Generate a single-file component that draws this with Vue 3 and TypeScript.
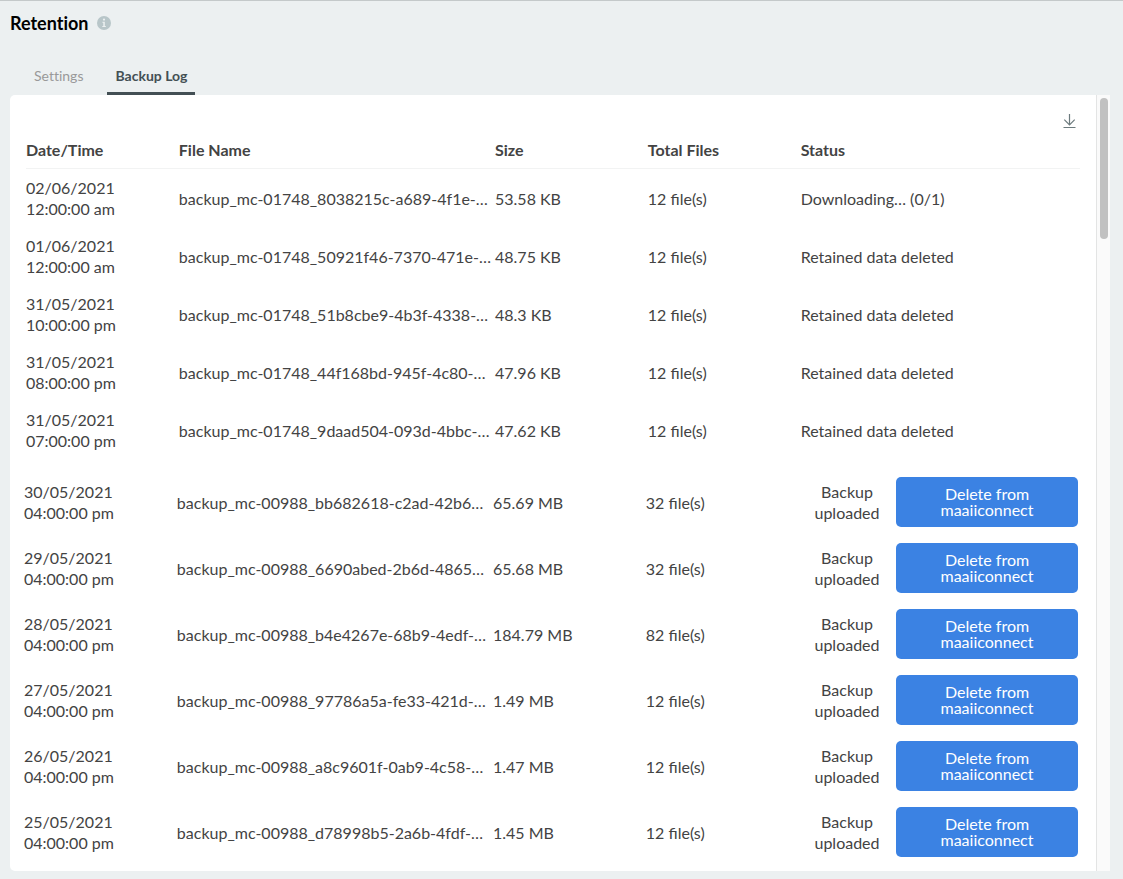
<script setup lang="ts">
import { ref } from 'vue'

interface LogEntry {
  date: string
  time: string
  file: string
  size: string
  total: number
  status: string
}

const tabs = ['Settings', 'Backup Log']
const activeTab = ref('Backup Log')

const processed: LogEntry[] = [
  { date: '02/06/2021', time: '12:00:00 am', file: 'backup_mc-01748_8038215c-a689-4f1e-…', size: '53.58 KB', total: 12, status: 'Downloading… (0/1)' },
  { date: '01/06/2021', time: '12:00:00 am', file: 'backup_mc-01748_50921f46-7370-471e-…', size: '48.75 KB', total: 12, status: 'Retained data deleted' },
  { date: '31/05/2021', time: '10:00:00 pm', file: 'backup_mc-01748_51b8cbe9-4b3f-4338-…', size: '48.3 KB', total: 12, status: 'Retained data deleted' },
  { date: '31/05/2021', time: '08:00:00 pm', file: 'backup_mc-01748_44f168bd-945f-4c80-…', size: '47.96 KB', total: 12, status: 'Retained data deleted' },
  { date: '31/05/2021', time: '07:00:00 pm', file: 'backup_mc-01748_9daad504-093d-4bbc-…', size: '47.62 KB', total: 12, status: 'Retained data deleted' },
]

const uploaded: LogEntry[] = [
  { date: '30/05/2021', time: '04:00:00 pm', file: 'backup_mc-00988_bb682618-c2ad-42b6…', size: '65.69 MB', total: 32, status: 'Backup uploaded' },
  { date: '29/05/2021', time: '04:00:00 pm', file: 'backup_mc-00988_6690abed-2b6d-4865…', size: '65.68 MB', total: 32, status: 'Backup uploaded' },
  { date: '28/05/2021', time: '04:00:00 pm', file: 'backup_mc-00988_b4e4267e-68b9-4edf-…', size: '184.79 MB', total: 82, status: 'Backup uploaded' },
  { date: '27/05/2021', time: '04:00:00 pm', file: 'backup_mc-00988_97786a5a-fe33-421d-…', size: '1.49 MB', total: 12, status: 'Backup uploaded' },
  { date: '26/05/2021', time: '04:00:00 pm', file: 'backup_mc-00988_a8c9601f-0ab9-4c58-…', size: '1.47 MB', total: 12, status: 'Backup uploaded' },
  { date: '25/05/2021', time: '04:00:00 pm', file: 'backup_mc-00988_d78998b5-2a6b-4fdf-…', size: '1.45 MB', total: 12, status: 'Backup uploaded' },
]
</script>

<template>
  <main class="page">
    <header class="heading">
      <h1>Retention</h1>
      <svg class="info" viewBox="0 0 14 14" aria-hidden="true">
        <circle cx="7" cy="7" r="7" fill="#b8c6c9" />
        <circle cx="7" cy="3.6" r="1.1" fill="#ecf0f1" />
        <path d="M5.4 5.8H7.8V10H8.8V11H5.3V10H6.3V6.8H5.4Z" fill="#ecf0f1" />
      </svg>
    </header>

    <nav class="tabs" role="tablist">
      <button
        v-for="tab in tabs"
        :key="tab"
        type="button"
        role="tab"
        class="tab"
        :class="{ active: tab === activeTab }"
        :aria-selected="tab === activeTab"
        @click="activeTab = tab"
      >{{ tab }}</button>
    </nav>

    <section class="panel">
      <div class="content">
        <div class="toolbar">
          <button type="button" class="download" aria-label="Download">
            <svg viewBox="0 0 14 16" aria-hidden="true">
              <path d="M6.5 1V11.5M1.3 6.6L6.5 11.8L11.7 6.6M.5 14.5H12.5" fill="none" stroke="#6c7a7d" stroke-width="1.2" />
            </svg>
          </button>
        </div>
        <table>
          <colgroup>
            <col class="col-date" />
            <col class="col-file" />
            <col class="col-size" />
            <col class="col-total" />
            <col />
          </colgroup>
          <thead>
            <tr>
              <th scope="col">Date/Time</th>
              <th scope="col">File Name</th>
              <th scope="col">Size</th>
              <th scope="col">Total Files</th>
              <th scope="col">Status</th>
            </tr>
          </thead>
          <tbody>
            <tr v-for="entry in processed" :key="entry.file">
              <td><div class="cell date"><span>{{ entry.date }}</span><span>{{ entry.time }}</span></div></td>
              <td><div class="cell file">{{ entry.file }}</div></td>
              <td><div class="cell">{{ entry.size }}</div></td>
              <td><div class="cell">{{ entry.total }} file(s)</div></td>
              <td><div class="cell">{{ entry.status }}</div></td>
            </tr>
          </tbody>
          <tbody class="uploaded">
            <tr v-for="entry in uploaded" :key="entry.file">
              <td><div class="cell date"><span>{{ entry.date }}</span><span>{{ entry.time }}</span></div></td>
              <td><div class="cell file">{{ entry.file }}</div></td>
              <td><div class="cell">{{ entry.size }}</div></td>
              <td><div class="cell">{{ entry.total }} file(s)</div></td>
              <td>
                <div class="action">
                  <span class="state">{{ entry.status }}</span>
                  <button type="button" class="delete">Delete from maaiiconnect</button>
                </div>
              </td>
            </tr>
          </tbody>
        </table>
      </div>
      <div class="track" aria-hidden="true"><div class="thumb"></div></div>
    </section>
  </main>
</template>

<style>
body {
  margin: 0;
  background: #ecf0f1;
}
</style>

<style scoped>
.page {
  box-sizing: border-box;
  min-height: 100vh;
  padding: 0 13px 8px 10px;
  border-top: 1px solid #c4c9ca;
  background: #ecf0f1;
  color: #434343;
  font-family: Lato, 'Liberation Sans', sans-serif;
  font-size: 16px;
  line-height: 21px;
}

.heading {
  display: flex;
  align-items: center;
  gap: 8px;
  padding-top: 10px;
}

h1 {
  margin: 0;
  color: #000;
  font-size: 18px;
  font-weight: 700;
  font-variant-ligatures: none;
  line-height: 24px;
}

.info {
  width: 14px;
  height: 14px;
}

.tabs {
  display: flex;
  gap: 16px;
  padding: 23px 0 0 16px;
}

.tab {
  padding: 8px 8px 6px;
  border: 0;
  border-bottom: 3px solid transparent;
  border-radius: 3px 3px 0 0;
  background: none;
  color: #999;
  font: inherit;
  font-size: 14px;
  font-variant-ligatures: none;
  line-height: 20px;
  cursor: pointer;
}

.tab.active {
  border-bottom-color: #434f54;
  color: #434f54;
  font-weight: 700;
}

.panel {
  display: flex;
  border-radius: 5px 0 0 5px;
  background: #fff;
}

.content {
  flex: 1;
  min-width: 0;
  padding: 18px 16px 6px;
}

.toolbar {
  display: flex;
  justify-content: flex-end;
  padding-right: 3px;
}

.download {
  width: 14px;
  height: 16px;
  padding: 0;
  border: 0;
  background: none;
  cursor: pointer;
}

.download svg {
  display: block;
  width: 14px;
  height: 16px;
}

.track {
  width: 13px;
  border-left: 1px solid #e3e4e4;
  background: #fafafa;
}

.thumb {
  width: 8px;
  height: 141px;
  margin: 3px 0 0 3px;
  border-radius: 4px;
  background: #c1c1c1;
}

table {
  width: 100%;
  table-layout: fixed;
  border-collapse: separate;
  border-spacing: 0;
}

.col-date,
.col-size,
.col-total {
  width: 14.5%;
}

.col-file {
  width: 30%;
}

th {
  padding: 10px 0 8px;
  border-bottom: 1px solid #f2f3f3;
  font-weight: 700;
  text-align: left;
}

td {
  padding: 8px 0;
  vertical-align: middle;
}

.date span {
  display: block;
}

.file {
  overflow: hidden;
  white-space: nowrap;
}

.uploaded .cell {
  margin-left: -2px;
}

.uploaded tr:first-child td {
  padding-top: 18px;
}

.action {
  display: flex;
  align-items: center;
  justify-content: flex-end;
  gap: 16px;
  padding-right: 2px;
}

.state {
  width: 66px;
  text-align: center;
}

.delete {
  width: 182px;
  height: 50px;
  padding: 0 24px;
  border: 0;
  border-radius: 5px;
  background: #3b82e3;
  color: #fff;
  font: inherit;
  line-height: 16px;
  cursor: pointer;
}
</style>
